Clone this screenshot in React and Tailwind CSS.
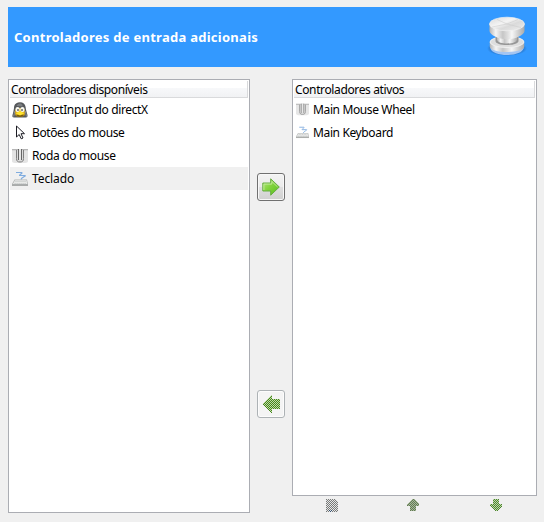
import React from 'react';

function Checker({ id, color }) {
  return (
    <pattern id={id} width="2" height="2" patternUnits="userSpaceOnUse">
      <rect width="1" height="1" fill={color} />
      <rect x="1" y="1" width="1" height="1" fill={color} />
    </pattern>
  );
}

function Penguin() {
  return (
    <svg width="16" height="16" viewBox="0 0 16 16" className="shrink-0">
      <path d="M2.200 4C3 1.300 5.300.2 8 .2c3 0 5.300 1.800 5.600 4.800.2 3 1.200 5 1.900 8 .2 1.700-.5 2.500-1.500 2.500H2C.6 15.500.1 14.700.5 13 1.200 10 1.900 8 2.200 4z" fill="#55585b" />
      <path d="M4.500 4C5.200 2 7 1.200 8.500 1.500c1.500.3 2 1.500 2.300 3z" fill="#7c7f82" />
      <path d="M1.700 14.500c.3-2 .9-4 1.200-5.500M14.400 14.500c-.2-2-.8-4-1.300-5.500" stroke="#8c8f92" fill="none" />
      <rect x="3.200" y="6" width="9.600" height="8.500" rx="3" fill="#e0b321" />
      <path d="M4 12.800h8c-.5 1.500-2 2.200-4 2.200s-3.500-.7-4-2.200z" fill="#7b5e0f" />
      <rect x="3.500" y="5" width="4.200" height="5" rx="2" fill="#f8f8f0" />
      <rect x="8.300" y="5" width="4.200" height="5" rx="2" fill="#f8f8f0" />
      <path d="M5.500 7h1v2h-1zM9.500 7h1v2h-1z" fill="#222" />
      <path d="M3.800 11.300 8 9.300l4.200 2L8 13.500z" fill="#ffe52e" />
    </svg>
  );
}

function Cursor() {
  return (
    <svg width="16" height="16" viewBox="0 0 16 16" className="shrink-0">
      <path d="M4.500 1v11l2.700-2.500 2 4.300 1.800-.8-2-4.300h3.500z" fill="#fff" stroke="#1c1c24" strokeWidth="1" />
    </svg>
  );
}

function Wheel({ small }) {
  return (
    <svg width={small ? 13 : 16} height={small ? 13 : 16} viewBox="0 0 16 16" className={small ? 'shrink-0 opacity-90' : 'shrink-0'}>
      <path d="M0 1h16v12c0 1-1 2-3 2H3c-2 0-3-1-3-2z" fill="#e4e4e4" />
      <path d="M0 1h16v1.300H0z" fill="#b5b5b5" />
      <path d="M4.500 2v8.500c0 2.500 1 3.500 3.500 3.500s3.500-1 3.500-3.500V2" fill="#ddd" stroke="#808080" strokeWidth="1" />
      <path d="M6 1h1v11H6zM9 1h1v11H9z" fill="#666" />
      <rect x="7" y="1" width="2" height="10.500" fill="#e6e6e6" />
    </svg>
  );
}

function Keyboard({ small }) {
  return (
    <svg width={small ? 13 : 16} height={small ? 13 : 16} viewBox="0 0 16 16" className={small ? 'shrink-0 opacity-90' : 'shrink-0'}>
      <path d="M4 1.500h5.500C11.500 2 7 3.500 7.500 4.500H13c1.500.5-3.500 2-4 4" fill="none" stroke="#7facdf" strokeWidth="1.200" />
      <path d="M2.500 8.500H15l1 4.500v1.700H0V13z" fill="#b0b3b2" />
      <path d="M3 9.200h11.500l.8 3.800H.8z" fill="#e8e9e8" />
      <path d="M3.500 10.500h10.500M2.600 12.500h12" stroke="#b4b7b6" strokeWidth=".8" strokeDasharray="1 1" />
      <path d="M0 14.200h16" stroke="#9ea1a0" />
    </svg>
  );
}

function Stack() {
  return (
    <svg width="40" height="44" viewBox="0 0 40 44" className="shrink-0">
      <defs>
        <linearGradient id="metal">
          <stop offset="0" stopColor="#b5b5b5" />
          <stop offset=".18" stopColor="#f5f5f5" />
          <stop offset=".38" stopColor="#c6c6c6" />
          <stop offset=".52" stopColor="#dedede" />
          <stop offset=".64" stopColor="#f6f6f6" />
          <stop offset="1" stopColor="#aaa" />
        </linearGradient>
        <linearGradient id="top" x1="0" y1="0" x2="1" y2="1">
          <stop offset="0" stopColor="#d8d8d8" />
          <stop offset=".4" stopColor="#f4f4f4" />
          <stop offset=".6" stopColor="#dadada" />
          <stop offset="1" stopColor="#efefef" />
        </linearGradient>
        <radialGradient id="shade">
          <stop offset=".7" stopColor="#1c579f" stopOpacity=".7" />
          <stop offset="1" stopColor="#1c579f" stopOpacity="0" />
        </radialGradient>
      </defs>
      <ellipse cx="20" cy="33.500" rx="20" ry="7.500" fill="url(#shade)" />
      <path d="M3.500 30v3.500c1 4 8 6.500 16.500 6.500s15.500-2.500 16.500-6.500V30z" fill="#a3c5f3" />
      <path d="M2.800 27v4.500c0 3.500 8 5.500 17.200 5.500s17.200-2 17.200-5.500V27z" fill="url(#metal)" />
      <ellipse cx="20" cy="27" rx="17" ry="5.500" fill="#dedede" stroke="#f5f5f5" strokeWidth=".8" />
      <path d="M8.500 22v4c0 2.500 5 4 11.500 4s11.500-1.500 11.500-4v-4z" fill="#969696" />
      <path d="M10 22v3c1 2.500 5 3.500 10 3.500s9-1 10-3.500v-3z" fill="url(#metal)" />
      <path d="M2.500 9v7c0 2 2.500 4 6 5.800 3 1.600 7 2.500 11.500 2.500s8.500-.9 11.500-2.500c3.500-1.800 6-3.800 6-5.800V9z" fill="url(#metal)" />
      <ellipse cx="20" cy="9" rx="17.500" ry="6.800" fill="url(#top)" stroke="#f1f1f1" strokeWidth=".7" />
      <path d="M20 9 10 4.500M20 9 5 12M20 9l11-4.500M20 9l14 3.500" stroke="#c8c8c8" strokeWidth=".5" />
    </svg>
  );
}

function ArrowRight() {
  return (
    <svg width="18" height="18" viewBox="0 0 18 18">
      <defs>
        <linearGradient id="green" x1="0" y1="0" x2="1" y2="1">
          <stop offset="0" stopColor="#b6e982" />
          <stop offset=".45" stopColor="#83d43e" />
          <stop offset="1" stopColor="#56bd1d" />
        </linearGradient>
      </defs>
      <path d="M.8 5h7.900V.8l8.600 8.200-8.600 8.200V13H.8z" fill="url(#green)" stroke="#67ac43" strokeLinejoin="round" />
      <path d="M1.900 12V6.100h7.900V3.400L15.600 9" fill="none" stroke="#c4ea9f" strokeWidth=".9" />
    </svg>
  );
}

function ArrowLeft() {
  return (
    <svg width="18" height="18" viewBox="0 0 18 18" shapeRendering="crispEdges">
      <defs><Checker id="leftDots" color="#46851b" /></defs>
      <path d="M0 9 9 0h1v4h8v10h-8v4H9z" fill="#bfdca8" />
      <path d="M0 9 9 0h1v4h8v10h-8v4H9z" fill="url(#leftDots)" />
    </svg>
  );
}

function SmallArrow({ down }) {
  const id = down ? 'downDots' : 'upDots';
  const path = down ? 'M3 0h6v5h3v2L7 12H5L0 7V5h3z' : 'M5 0h2l5 5v2H9v5H3V7H0V5z';
  return (
    <svg width="12" height="12" viewBox="0 0 12 12" shapeRendering="crispEdges">
      <defs><Checker id={id} color={down ? '#4c8430' : '#627a54'} /></defs>
      <path d={path} fill={down ? '#bed8a8' : '#a7b89b'} />
      <path d={path} fill={`url(#${id})`} />
    </svg>
  );
}

function EditPage() {
  return (
    <svg width="12" height="13" viewBox="0 0 12 13" shapeRendering="crispEdges">
      <defs><Checker id="pageDots" color="#777978" /></defs>
      <path d="M0 0h9l3 3v10H0z" fill="#e6e6e6" />
      <path d="M0 0h9l3 3v10H0z" fill="url(#pageDots)" />
      <path d="M3 11h1v1H3zM5 11h1v1H5zM4 12h1v1H4z" fill="#355274" />
    </svg>
  );
}

function Header({ children, spacing }) {
  return (
    <div className="mx-px mt-px flex h-[17px] shrink-0 items-center border-r border-b border-[#d9dadc] bg-[linear-gradient(#fff_0%,#fff_42%,#f7f8fa_46%,#f1f2f4_100%)] pl-px leading-4">
      <span className={`relative top-px ${spacing}`}>{children}</span>
    </div>
  );
}

function Row({ icon, children, selected, spacing }) {
  return (
    <div className={`mx-px flex h-[23px] items-center gap-1 pl-[2px] ${selected ? 'bg-[#f0f0f0]' : ''}`}>
      {icon}
      <span className={`leading-4 ${spacing}`}>{children}</span>
    </div>
  );
}

export default function App() {
  return (
    <main className="flex h-[522px] w-[544px] flex-col overflow-hidden bg-[#f0f0f0] pt-[7px] pr-[7px] pl-2 font-['Noto_Sans','Open_Sans',sans-serif] text-[12px] whitespace-nowrap text-black">
      <header className="flex h-[60px] shrink-0 items-center justify-between bg-[#3399ff] pr-[10px] pl-[6px] text-white">
        <h1 className="pt-[2px] text-[13px] font-bold tracking-[0.27px]">Controladores de entrada adicionais</h1>
        <Stack />
      </header>
      <div className="mt-3 flex h-[434px]">
        <section className="flex w-[242px] flex-col border border-[#abadb3] bg-white">
          <Header spacing="tracking-[-0.4px]">Controladores disponíveis</Header>
          <Row icon={<Penguin />} spacing="tracking-[-0.38px]">DirectInput do directX</Row>
          <Row icon={<Cursor />} spacing="tracking-[-0.4px]">Botões do mouse</Row>
          <Row icon={<Wheel />} spacing="tracking-[-0.35px]">Roda do mouse</Row>
          <Row icon={<Keyboard />} spacing="tracking-[-0.1px]" selected>Teclado</Row>
        </section>
        <div className="flex w-[42px] flex-col items-center pt-[94px]">
          <button aria-label="Adicionar" className="flex size-7 items-center justify-center rounded-[3px] border border-[#707070] bg-[linear-gradient(#f3f3f3_0%,#ebebeb_48%,#dedede_52%,#d0d0d0_100%)] shadow-[inset_0_0_0_1px_#f8f8f8]"><ArrowRight /></button>
          <button aria-label="Remover" disabled className="mt-[189px] flex size-7 items-center justify-center rounded-[3px] border border-[#adb2b5] bg-[#f4f4f4] shadow-[inset_0_0_0_1px_#fcfcfc]"><ArrowLeft /></button>
        </div>
        <div className="w-[245px]">
          <section className="flex h-[417px] flex-col border border-[#abadb3] bg-white">
            <Header spacing="tracking-[-0.37px]">Controladores ativos</Header>
            <Row icon={<Wheel small />} spacing="tracking-[-0.37px]">Main Mouse Wheel</Row>
            <Row icon={<Keyboard small />} spacing="tracking-[-0.37px]">Main Keyboard</Row>
          </section>
          <div className="flex pt-[3px] pl-[34px]">
            <EditPage />
            <span className="ml-[69px]"><SmallArrow /></span>
            <span className="ml-[71px]"><SmallArrow down /></span>
          </div>
        </div>
      </div>
    </main>
  );
}
